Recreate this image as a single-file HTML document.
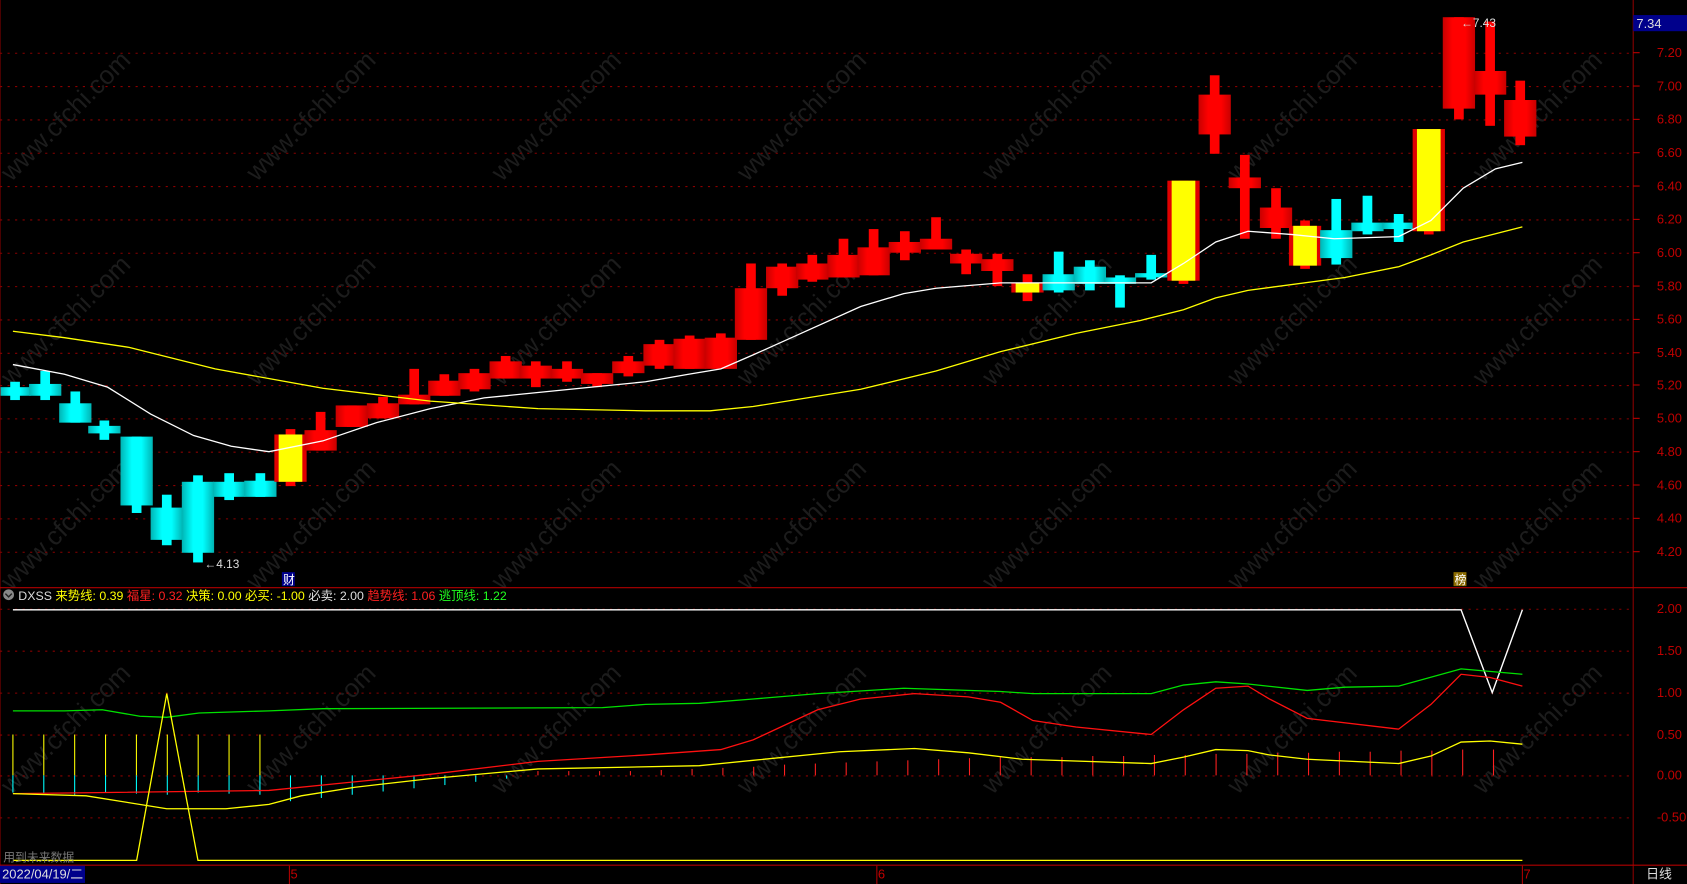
<!DOCTYPE html>
<html><head><meta charset="utf-8"><style>
html,body{margin:0;padding:0;background:#000;overflow:hidden}
svg{display:block}
text{font-family:"Liberation Sans","Noto Sans CJK SC",sans-serif}
</style></head><body>
<svg id="s" width="1687" height="884" viewBox="0 0 1568 822" preserveAspectRatio="none" xmlns="http://www.w3.org/2000/svg">
<defs>
<linearGradient id="gc" x1="0" x2="1"><stop offset="0" stop-color="#00b4b4"/><stop offset="0.35" stop-color="#00ffff"/><stop offset="0.65" stop-color="#00ffff"/><stop offset="1" stop-color="#00b4b4"/></linearGradient>
<linearGradient id="gr" x1="0" x2="1"><stop offset="0" stop-color="#c80000"/><stop offset="0.3" stop-color="#ff0000"/><stop offset="0.7" stop-color="#ff0000"/><stop offset="1" stop-color="#c80000"/></linearGradient>
</defs>
<rect width="1568" height="822" fill="#000"/>
<g id="wm" fill="#1c1c1c" font-size="24"></g>
<g id="grid" stroke="#8a0000" stroke-width="1" stroke-dasharray="2,5"></g>
<g id="candles"></g>
<polyline fill="none" stroke="#fff" stroke-width="1.2" points="12,339 60,348 100,360 140,385 180,405 215,415 250,420 300,410 350,393 400,380 450,370 500,365 550,360 600,355 640,348 670,343 700,330 740,312 800,285 840,273 870,268 930,263 1070,263 1100,245 1130,225 1160,215 1200,218 1240,222 1300,220 1330,205 1360,175 1390,157 1415,151"/>
<polyline fill="none" stroke="#ffff00" stroke-width="1.2" points="12,308 60,314 120,323 200,343 300,361 400,373 500,380 600,382 660,382 700,378 800,362 870,345 930,327 1000,310 1060,298 1100,288 1130,277 1160,270 1250,258 1300,248 1330,237 1360,225 1415,211"/>
<text x="190" y="528" fill="#ddd" font-size="11">←4.13</text>
<text x="1358" y="25" fill="#ddd" font-size="11">←7.43</text>
<line x1="1518" y1="0" x2="1518" y2="822" stroke="#8a0000"/>
<line x1="0" y1="0" x2="0" y2="822" stroke="#8a0000"/>
<line x1="0" y1="546.5" x2="1568" y2="546.5" stroke="#b00000"/>
<line x1="0" y1="804.5" x2="1568" y2="804.5" stroke="#b00000"/>
<g id="axis" fill="#c00000" font-size="12"></g>
<rect x="1518" y="14" width="50" height="15" fill="#00008b"/>
<text x="1521" y="26" fill="#ddd" font-size="12">7.34</text>
<rect x="262" y="532" width="12" height="13" fill="#00008b"/><text x="263" y="543" fill="#fff" font-size="11">财</text>
<rect x="1351" y="532" width="12" height="13" fill="#8b6b00"/><text x="1352" y="543" fill="#fff" font-size="11">榜</text>
<circle cx="8" cy="553" r="5" fill="#888"/><path d="M5,552 l3,3 l3,-3" stroke="#222" fill="none" stroke-width="1.3"/>
<text y="558" font-size="11.5"><tspan x="17" fill="#ddd">DXSS</tspan><tspan fill="#ffff00"> 来势线: 0.39</tspan><tspan fill="#ff2020"> 福星: 0.32</tspan><tspan fill="#ffff00"> 决策: 0.00</tspan><tspan fill="#ffff00"> 必买: -1.00</tspan><tspan fill="#ddd"> 必卖: 2.00</tspan><tspan fill="#ff2020"> 趋势线: 1.06</tspan><tspan fill="#20ff20"> 逃顶线: 1.22</tspan></text>
<g id="bars"></g>
<polyline fill="none" stroke="#fff" stroke-width="1.3" points="12,567 1358,567 1387,644 1415,567"/>
<polyline fill="none" stroke="#00e000" stroke-width="1.2" points="12,661 60,661 95,660 130,666 155,667 185,663 250,661 300,659 560,658 600,655 650,654 700,650 760,645 840,640 930,643 960,645 1070,645 1100,637 1130,634 1160,636 1215,642 1250,639 1300,638 1358,622 1415,627"/>
<polyline fill="none" stroke="#ff1010" stroke-width="1.2" points="12,738 250,735 320,728 400,720 500,708 600,702 670,697 700,688 760,660 800,650 850,645 900,648 930,653 960,670 1000,676 1070,683 1100,660 1130,640 1160,638 1180,650 1215,668 1300,678 1330,655 1358,627 1385,630 1415,638"/>
<polyline fill="none" stroke="#ffff00" stroke-width="1.2" points="12,738 80,740 155,752 210,752 250,748 280,740 330,732 400,724 500,715 650,712 700,707 780,699 850,696 900,700 950,706 1070,710 1100,704 1130,697 1160,698 1180,702 1215,706 1300,710 1330,703 1358,690 1385,689 1415,692"/>
<polyline fill="none" stroke="#ffff00" stroke-width="1.2" points="12,800 127,800 155,645 184,800 1415,800"/>
<text x="3" y="801" fill="#777" font-size="11">用到未来数据</text>
<rect x="0" y="805" width="79" height="16" fill="#00008b"/>
<text x="2" y="817" fill="#ddd" font-size="12">2022/04/19/二</text>
<line x1="269" y1="805" x2="269" y2="822" stroke="#b00000"/><text x="270" y="817" fill="#c00000" font-size="12">5</text>
<line x1="815" y1="805" x2="815" y2="822" stroke="#b00000"/><text x="816" y="817" fill="#c00000" font-size="12">6</text>
<line x1="1415" y1="805" x2="1415" y2="822" stroke="#b00000"/><text x="1416" y="817" fill="#c00000" font-size="12">7</text>
<text x="1530" y="817" fill="#ddd" font-size="12">日线</text>
</svg>
<script>
var NS="http://www.w3.org/2000/svg";
function el(p,t,a,txt){var e=document.createElementNS(NS,t);for(var k in a)e.setAttribute(k,a[k]);if(txt)e.textContent=txt;document.getElementById(p).appendChild(e);return e;}
for(var i=0;i<7;i++)for(var j=0;j<4;j++){var x=60+i*228,y=120+j*190;el('wm','text',{x:x-70,y:y,transform:'rotate(-45 '+x+' '+y+')'},'www.cfchi.com');}
var pr=[["7.20",49],["7.00",80],["6.80",111],["6.60",142],["6.40",173],["6.20",204],["6.00",235],["5.80",266],["5.60",297],["5.40",328],["5.20",358],["5.00",389],["4.80",420],["4.60",451],["4.40",482],["4.20",513]];
pr.forEach(function(p){el('grid','line',{x1:0,y1:p[1]+.5,x2:1518,y2:p[1]+.5});el('axis','text',{x:1540,y:p[1]+4},p[0]);el('axis','line',{x1:1518,y1:p[1],x2:1524,y2:p[1],stroke:'#c00000'});});
var ir=[["2.00",566],["1.50",605],["1.00",644],["0.50",683],["0.00",721],["-0.50",760]];
ir.forEach(function(p){el('grid','line',{x1:0,y1:p[1]+.5,x2:1518,y2:p[1]+.5});el('axis','text',{x:1540,y:p[1]+4},p[0]);});
var C=[[14,360,368,355,372,'c'],[42,357,368,345,372,'c'],[70,375,393,364,393,'c'],[97,396,403,391,409,'c'],[127,406,470,406,477,'c'],[155,472,502,460,507,'c'],[184,448,514,442,523,'c'],[213,448,462,440,465,'c'],[242,447,462,440,462,'c'],[270,404,448,399,452,'y'],[298,400,419,383,419,'r'],[327,377,397,377,397,'r'],[356,375,389,369,389,'r'],[385,367,376,343,376,'r'],[413,354,368,348,368,'r'],[441,347,362,343,364,'r'],[470,336,352,331,352,'r'],[498,340,352,336,360,'r'],[527,343,352,336,355,'r'],[555,347,357,347,360,'r'],[584,336,347,331,350,'r'],[613,320,340,316,343,'r'],[641,315,343,312,343,'r'],[670,314,343,310,343,'r'],[698,268,316,245,316,'r'],[727,248,268,245,275,'r'],[755,245,260,237,262,'r'],[784,237,258,222,258,'r'],[812,230,256,213,256,'r'],[841,225,235,215,242,'r'],[870,222,232,202,232,'r'],[898,236,245,232,255,'r'],[927,241,252,236,266,'r'],[955,263,272,255,280,'y'],[984,255,270,234,272,'c'],[1013,248,264,242,270,'c'],[1041,258,264,256,286,'c'],[1070,254,258,237,260,'c'],[1100,168,261,168,264,'y'],[1129,88,125,70,143,'r'],[1157,165,175,144,222,'r'],[1186,193,212,175,222,'r'],[1213,210,247,205,250,'y'],[1242,214,240,185,246,'c'],[1271,207,215,182,218,'c'],[1300,207,213,199,225,'c'],[1328,120,215,120,218,'y'],[1356,16,101,16,111,'r'],[1385,66,88,20,117,'r'],[1413,93,127,75,135,'r']];
C.forEach(function(c){var x=c[0],f=c[5]=='c'?'url(#gc)':'url(#gr)',w=c[5]=='c'?'#00ffff':'#ff0000';
el('candles','rect',{x:x-4.5,y:c[3],width:9,height:c[4]-c[3],fill:w});
if(c[5]=='y'){el('candles','rect',{x:x-15,y:c[1],width:30,height:c[2]-c[1],fill:'#e00000'});el('candles','rect',{x:x-11,y:c[1],width:22,height:c[2]-c[1],fill:'#ffff00'});}
else el('candles','rect',{x:x-15,y:c[1],width:30,height:Math.max(c[2]-c[1],4),fill:f});});
for(var k=0;k<9;k++){var x=12+k*28.7;el('bars','line',{x1:x,y1:683,x2:x,y2:721,stroke:'#ffff00'});el('bars','line',{x1:x,y1:721,x2:x,y2:737+(k%3),stroke:'#00ffff'});}
for(var k=0;k<8;k++){var x=270+k*28.7;el('bars','line',{x1:x,y1:721,x2:x,y2:745-k*3,stroke:'#00ffff'});}
var ys=[721,721,720,719,718,717,716,715,713,712,711,710,709,708,707,706,706,706,705,705,704,704,703,703,702,702,701,701,700,700,699,699,698,698,697];
for(var k=0;k<32;k++){var x=500+k*28.65;el('bars','line',{x1:x,y1:721,x2:x,y2:Math.min(ys[k],719)-2,stroke:'#ff2020'});}
</script>
</body></html>
